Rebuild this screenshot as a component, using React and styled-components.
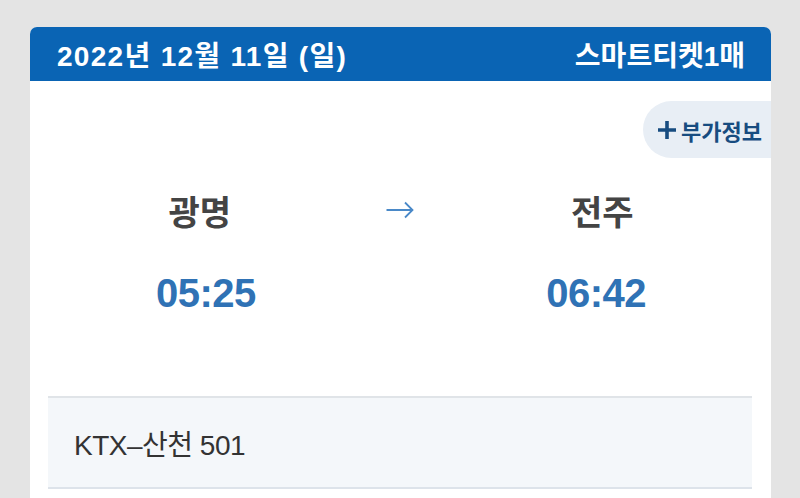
import React from "react";
import styled, { createGlobalStyle } from "styled-components";

const GlobalStyle = createGlobalStyle`
  html, body {
    margin: 0;
    padding: 0;
    background: #e4e4e4;
    font-family: "Liberation Sans", "Noto Sans CJK KR", sans-serif;
  }
  body {
    height: 100vh;
    overflow: hidden;
  }
`;

const Page = styled.div`
  padding: 27px 29px 0 30px;
`;

const TicketCard = styled.div`
  background: #ffffff;
  border-radius: 7px 7px 0 0;
  overflow: hidden;
  min-height: 520px;
`;

const TicketHeader = styled.div`
  height: 54px;
  background: #0a64b4;
  color: #ffffff;
  display: flex;
  align-items: center;
  justify-content: space-between;
  padding: 0 26px 0 27px;
  font-weight: bold;
  font-size: 28px;
`;

const DateText = styled.span`
  letter-spacing: 1.3px;
`;

const TicketCount = styled.span`
  letter-spacing: 0;
`;

const TicketBody = styled.div`
  padding: 20px 0 0;
`;

const TagRow = styled.div`
  display: flex;
  justify-content: flex-end;
`;

const InfoTag = styled.button`
  height: 57px;
  border: none;
  border-radius: 29px 0 0 29px;
  background: #e8eef5;
  color: #174c80;
  font-family: inherit;
  font-weight: bold;
  font-size: 22px;
  letter-spacing: 0;
  padding: 0 9px 0 14px;
  display: flex;
  align-items: center;
  gap: 4px;
  cursor: pointer;
`;

const Route = styled.div`
  display: grid;
  grid-template-columns: 1fr 1fr 1fr;
  grid-template-rows: 40px 48px;
  row-gap: 36px;
  padding: 0 74px;
  margin-top: 35px;
  align-items: center;
  justify-items: center;
`;

const Station = styled.div`
  font-size: 34px;
  font-weight: bold;
  color: #444444;
  line-height: 40px;
  transform: translateX(${(p) => p.shift || 0}px);
`;

const Time = styled.div`
  font-size: 40px;
  font-weight: bold;
  color: #2f72b5;
  line-height: 48px;
  letter-spacing: -0.5px;
  transform: translateX(${(p) => p.shift || 0}px);
`;

const ArrowCell = styled.div`
  display: flex;
  align-items: center;
  justify-content: center;
  margin-top: -6px;
`;

const TrainPanel = styled.div`
  margin: 79px 19px 0 18px;
  height: 89px;
  background: #f4f7fa;
  border-top: 2px solid #e0e4e8;
  border-bottom: 2px solid #dde3ea;
  display: flex;
  align-items: center;
  padding: 0 26px;
  font-size: 28px;
  color: #333333;
  letter-spacing: -0.5px;
`;

const App = () => {
  return (
    <>
      <GlobalStyle />
      <Page>
        <TicketCard>
          <TicketHeader>
            <DateText>2022년 12월 11일 (일)</DateText>
            <TicketCount>스마트티켓1매</TicketCount>
          </TicketHeader>
          <TicketBody>
            <TagRow>
              <InfoTag>
                <svg width="20" height="20" viewBox="0 0 20 20">
                  <path d="M10 1v18M1 10h18" stroke="#174c80" strokeWidth="3.6" />
                </svg>
                부가정보
              </InfoTag>
            </TagRow>
            <Route>
              <Station shift={-3}>광명</Station>
              <ArrowCell>
                <svg width="30" height="18" viewBox="0 0 30 18">
                  <path
                    d="M1.5 9h26M20 1.5l7.5 7.5-7.5 7.5"
                    fill="none"
                    stroke="#4a89c8"
                    strokeWidth="1.8"
                  />
                </svg>
              </ArrowCell>
              <Station shift={4}>전주</Station>
              <Time shift={3}>05:25</Time>
              <div />
              <Time shift={-2}>06:42</Time>
            </Route>
            <TrainPanel>KTX–산천 501</TrainPanel>
          </TicketBody>
        </TicketCard>
      </Page>
    </>
  );
};

export default App;
